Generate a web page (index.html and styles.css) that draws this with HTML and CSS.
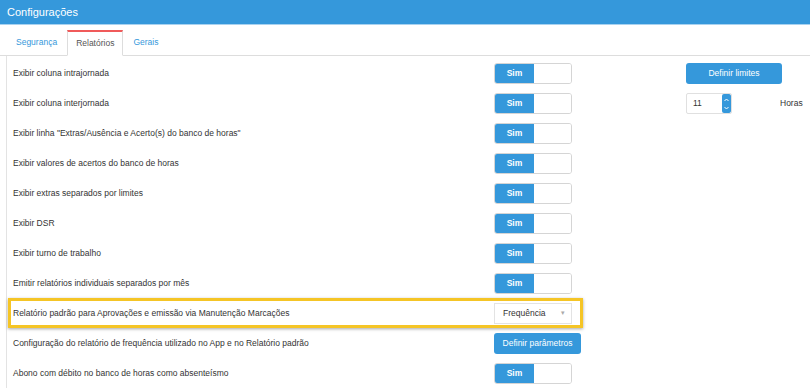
FILE: index.html
```html
<!DOCTYPE html>
<html lang="pt">
<head>
<meta charset="utf-8">
<link rel="stylesheet" href="styles.css">
</head>
<body>
<div class="header">Configurações</div>
<div class="tabs">
  <div class="tab">Segurança</div>
  <div class="tab active">Relatórios</div>
  <div class="tab">Gerais</div>
</div>
<div class="panel">
  <div class="row">
    <div class="label">Exibir coluna intrajornada</div>
    <div class="ctrl"><div class="toggle"><span class="on">Sim</span><span class="off"></span></div></div>
    <div class="extra"><button class="btn btn-limits">Definir limites</button></div>
  </div>
  <div class="row">
    <div class="label">Exibir coluna interjornada</div>
    <div class="ctrl"><div class="toggle"><span class="on">Sim</span><span class="off"></span></div></div>
    <div class="extra">
      <div class="num"><span class="num-val">11</span><span class="spin"><svg width="9" height="20" viewBox="0 0 9 20"><path d="M2.5 7 L4.5 5 L6.5 7" fill="none" stroke="#fff" stroke-width="1"/><path d="M2.5 13 L4.5 15 L6.5 13" fill="none" stroke="#fff" stroke-width="1"/></svg></span></div>
      <span class="unit">Horas</span>
    </div>
  </div>
  <div class="row">
    <div class="label">Exibir linha "Extras/Ausência e Acerto(s) do banco de horas"</div>
    <div class="ctrl"><div class="toggle"><span class="on">Sim</span><span class="off"></span></div></div>
  </div>
  <div class="row">
    <div class="label">Exibir valores de acertos do banco de horas</div>
    <div class="ctrl"><div class="toggle"><span class="on">Sim</span><span class="off"></span></div></div>
  </div>
  <div class="row">
    <div class="label">Exibir extras separados por limites</div>
    <div class="ctrl"><div class="toggle"><span class="on">Sim</span><span class="off"></span></div></div>
  </div>
  <div class="row">
    <div class="label">Exibir DSR</div>
    <div class="ctrl"><div class="toggle"><span class="on">Sim</span><span class="off"></span></div></div>
  </div>
  <div class="row">
    <div class="label">Exibir turno de trabalho</div>
    <div class="ctrl"><div class="toggle"><span class="on">Sim</span><span class="off"></span></div></div>
  </div>
  <div class="row">
    <div class="label">Emitir relatórios individuais separados por mês</div>
    <div class="ctrl"><div class="toggle"><span class="on">Sim</span><span class="off"></span></div></div>
  </div>
  <div class="row highlight">
    <div class="label">Relatório padrão para Aprovações e emissão via Manutenção Marcações</div>
    <div class="ctrl"><div class="select"><span>Frequência</span><span class="caret">▾</span></div></div>
  </div>
  <div class="row">
    <div class="label">Configuração do relatório de frequência utilizado no App e no Relatório padrão</div>
    <div class="ctrl"><button class="btn btn-params">Definir parâmetros</button></div>
  </div>
  <div class="row">
    <div class="label">Abono com débito no banco de horas como absenteísmo</div>
    <div class="ctrl"><div class="toggle"><span class="on">Sim</span><span class="off"></span></div></div>
  </div>
</div>
</body>
</html>
```

FILE: styles.css
```css
* { box-sizing: border-box; }
body {
  margin: 0;
  font-family: "Liberation Sans", Arial, sans-serif;
  font-size: 8.5px;
  color: #333;
  background: #fff;
}
.header {
  height: 25px;
  background: #3598db;
  border-bottom: 1px solid #a8d2f0;
  color: #fff;
  font-size: 11px;
  line-height: 24px;
  padding-left: 7px;
}
.tabs {
  display: flex;
  margin-top: 5px;
  padding-left: 7px;
  height: 26px;
  border-bottom: 1px solid #ddd;
}
.tab {
  padding: 0 9px;
  margin-right: 1px;
  line-height: 25px;
  color: #3598db;
  height: 26px;
}
.tab.active {
  color: #555;
  background: #fff;
  border: 1px solid #ddd;
  border-top: 2px solid #f05a5a;
  border-bottom-color: #fff;
  line-height: 23px;
  padding: 0 8px;
}
.panel {
  margin-left: 6px;
  border-left: 1px solid #e3e3e3;
  padding: 2px 0 0 6px;
}
.row {
  display: flex;
  align-items: center;
  height: 30px;
}
.label { width: 481px; flex: none; }
.ctrl { width: 192px; flex: none; display: flex; align-items: center; }
.extra { display: flex; align-items: center; }
.toggle {
  display: flex;
  width: 78px;
  height: 21px;
  border: 1px solid #d5d5d5;
  border-radius: 3px;
  overflow: hidden;
}
.toggle .on {
  width: 39px;
  background: #3598db;
  color: #fff;
  font-weight: bold;
  text-align: center;
  line-height: 19px;
}
.toggle .off { flex: 1; background: #fff; }
.btn {
  border: none;
  background: #3598db;
  color: #fff;
  font-family: inherit;
  font-size: 8.5px;
  border-radius: 3px;
  padding: 0;
}
.btn-limits { width: 96px; height: 21px; }
.btn-params { width: 87px; height: 21px; }
.num {
  display: flex;
  width: 46px;
  height: 21px;
  border: 1px solid #e0e0e0;
  border-radius: 2px;
  overflow: hidden;
}
.num-val { flex: 1; padding-left: 6px; line-height: 19px; }
.spin {
  width: 9px;
  background: #3598db;
  border-radius: 2px;
  display: flex;
}
.unit { margin-left: 48px; }
.highlight {
  margin-left: -5px;
  width: 575px;
  border: 3px solid #f5c526;
  padding-left: 2px;
  box-shadow: 0 1px 3px rgba(0,0,0,0.35);
}
.highlight .label { width: 481px; }
.select {
  display: flex;
  justify-content: space-between;
  align-items: center;
  width: 78px;
  height: 21px;
  border: 1px solid #e3e3e3;
  padding: 0 6px 0 8px;
  color: #333;
}
.caret { color: #aaa; font-size: 7px; }
```
